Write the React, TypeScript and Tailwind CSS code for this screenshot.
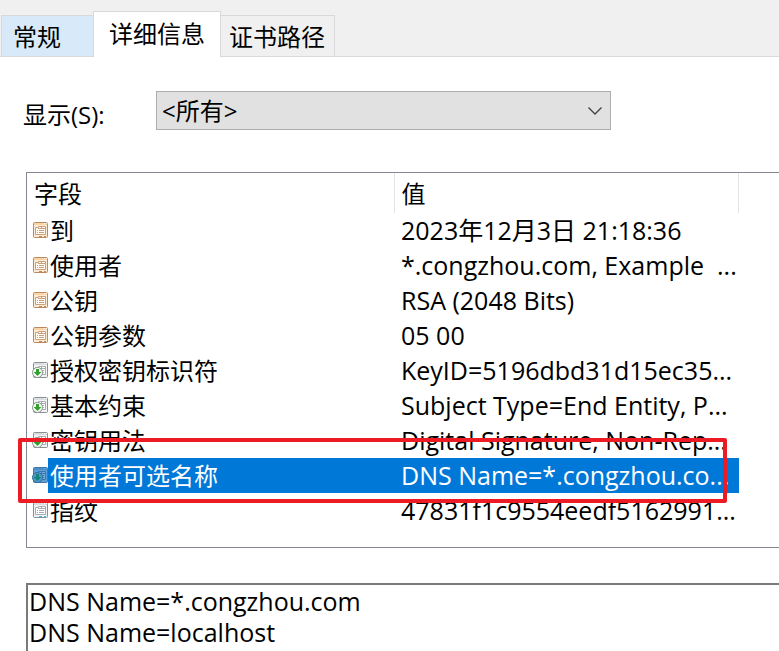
import React from "react";

type Kind = "field" | "extension" | "property";

interface Row {
  kind: Kind;
  field: string;
  value: string;
}

const rows: Row[] = [
  { kind: "field", field: "到", value: "2023年12月3日 21:18:36" },
  { kind: "field", field: "使用者", value: "*.congzhou.com, Example  ..." },
  { kind: "field", field: "公钥", value: "RSA (2048 Bits)" },
  { kind: "field", field: "公钥参数", value: "05 00" },
  { kind: "extension", field: "授权密钥标识符", value: "KeyID=5196dbd31d15ec35..." },
  { kind: "extension", field: "基本约束", value: "Subject Type=End Entity, P..." },
  { kind: "extension", field: "密钥用法", value: "Digital Signature, Non-Rep..." },
  { kind: "extension", field: "使用者可选名称", value: "DNS Name=*.congzhou.co..." },
  { kind: "property", field: "指纹", value: "47831f1c9554eedf5162991..." },
];

const SELECTED = 7;

function RowIcon({ kind, selected }: { kind: Kind; selected: boolean }) {
  const tan = kind === "field";
  const edge = tan ? "#b98a62" : selected ? "#3f77a6" : "#8b8f94";
  const paper = tan ? "#fdebd3" : selected ? "#5d9fd6" : "#f1f3f5";
  const bar = tan ? "#fbd3a4" : selected ? "#4a8fca" : "#dadde0";
  const ink = tan ? "#c9a07d" : selected ? "#3b78ae" : "#a9adb2";
  const sheet = tan ? "#fffaf3" : selected ? "#6cabdf" : "#ffffff";
  return (
    <svg className="mb-0.5 size-4 shrink-0" viewBox="0 0 16 16" aria-hidden="true">
      <rect x="1.5" y="0.5" width="14" height="15" rx="1" fill={paper} stroke={edge} />
      <rect x="2" y="1" width="13" height="2" fill={bar} />
      <path d="M12 1.5h1M14 1.5h1" stroke={sheet} />
      <path d="M3.5 5.5h3v-1h7v8h-10z" fill={sheet} stroke={ink} />
      <path d="M6 6.500h7M9.500 4v2" fill="none" stroke={ink} />
      <path d="M5 8.500h1M7 8.500h5M5 10.500h1M7 10.500h5" stroke={ink} />
      {tan && <path d="M7 14.500h3M12 14.500h2" stroke={edge} />}
      {kind === "property" && <path d="M5 8.500h1M5 10.500h1M7 14.500h3M12 14.500h2" stroke="#35c4ef" />}
      {kind === "extension" && (
        <>
          <circle cx="5.500" cy="10.500" r="5" fill={selected ? "#5298c9" : "#fbfdfb"} stroke={selected ? "#2f7199" : "#85948a"} />
          <path d="M4 7h3v3h2.500l-4 4-4-4H4z" fill={selected ? "#14857e" : "#2fa32b"} />
        </>
      )}
    </svg>
  );
}

function Tab({ label, className, selected = false }: { label: string; className: string; selected?: boolean }) {
  return (
    <button role="tab" aria-selected={selected} className={`border-[#d9d9d9] text-left whitespace-nowrap ${className}`}>
      {label}
    </button>
  );
}

export default function App() {
  return (
    <main className="flex min-h-screen flex-col overflow-x-hidden bg-white font-['Open_Sans','Noto_Sans_CJK_SC',sans-serif] text-2xl text-black">
      <div role="tablist" className="flex items-end border-b border-[#d9d9d9] bg-[#f0f0f0] pt-[11px] pl-px">
        <Tab label="常规" className="h-[41px] w-[92px] border-t border-l bg-[#d8eaf9] px-[11px] pt-0.5" />
        <Tab label="详细信息" selected className="-mb-px h-[46px] w-32 border-x border-t bg-white px-[15px] pb-0.5" />
        <Tab label="证书路径" className="h-[41px] w-[114px] border-t border-r px-2 pt-0.5" />
      </div>

      <section className="flex flex-1 flex-col pt-[34px] pl-[26px]">
        <div className="-ml-[3px] flex h-[39px] items-center">
          <label htmlFor="show" className="w-[133px] pt-2 whitespace-nowrap">
            显示(S):
          </label>
          <div className="relative w-[455px]">
            <select
              id="show"
              className="block h-[39px] w-full appearance-none rounded-none border border-[#adadad] bg-[#e1e1e1] px-[5px]"
            >
              <option>&lt;所有&gt;</option>
            </select>
            <svg className="pointer-events-none absolute top-[15px] right-2 h-2.5 w-4" viewBox="0 0 16 10" fill="none" aria-hidden="true">
              <path d="M1.500 1.500 8 8l6.500-6.500" stroke="#404040" strokeWidth="1.300" />
            </svg>
          </div>
        </div>

        <div className="mt-[42px] border-y border-l border-[#828790] pb-[19px]">
          <table className="w-[712px] table-fixed border-collapse text-left whitespace-pre">
            <thead>
              <tr className="h-10">
                <th className="w-[367px] border-r border-[#e5e5e5] p-0 pt-0.5 pl-[7px] font-normal">字段</th>
                <th className="border-r border-[#e5e5e5] p-0 pt-0.5 pl-[7px] font-normal">值</th>
              </tr>
            </thead>
            <tbody>
              {rows.map((row, i) => {
                const selected = i === SELECTED;
                return (
                  <tr key={row.field} aria-selected={selected} className="relative h-[35px] leading-[35px]">
                    <td className="p-0 pl-[5px]">
                      <div className="flex h-[35px] items-center">
                        <RowIcon kind={row.kind} selected={selected} />
                        <span className={`h-[35px] flex-1 pl-0.5 ${selected ? "bg-[#0078d7] text-white" : ""}`}>{row.field}</span>
                      </div>
                    </td>
                    <td className={`p-0 pl-[7px] text-[25px] leading-[35px] ${selected ? "bg-[#0078d7] text-white" : ""}`}>
                      {row.value}
                      {selected && (
                        <span className="pointer-events-none absolute -top-5 right-3 -bottom-2.5 -left-[9px] z-10 rounded-xs border-4 border-[#ed1c24]" />
                      )}
                    </td>
                  </tr>
                );
              })}
            </tbody>
          </table>
        </div>

        <textarea
          readOnly
          aria-label="值"
          defaultValue={"DNS Name=*.congzhou.com\nDNS Name=localhost"}
          className="mt-[35px] min-h-16 flex-1 resize-none overflow-hidden border-t-2 border-l-2 border-[#7a7a7a] px-px pt-px text-[25px] leading-[31px] outline-none"
        />
      </section>
    </main>
  );
}
